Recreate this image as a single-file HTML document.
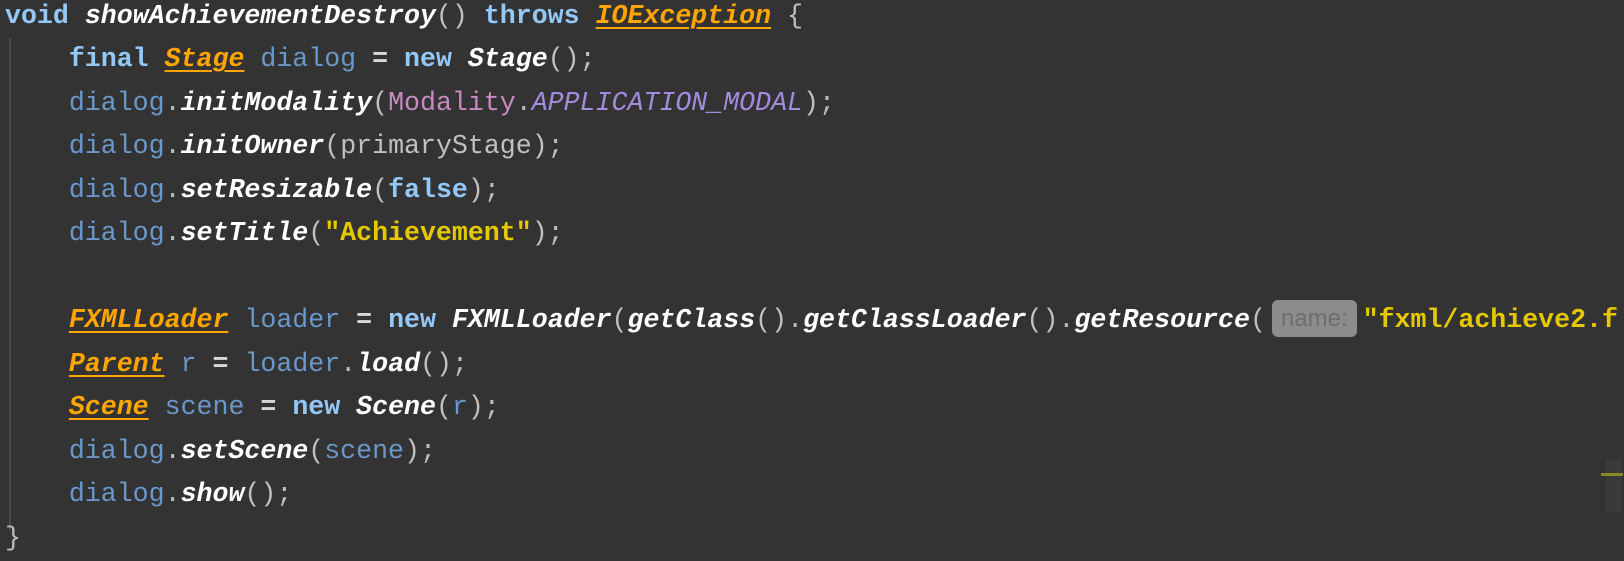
<!DOCTYPE html>
<html><head><meta charset="utf-8"><style>
html,body{margin:0;padding:0;background:#333333;width:1624px;height:542px;overflow:hidden}
.l{position:absolute;left:5px;height:43.5px;line-height:43.5px;font-family:"Liberation Mono","DejaVu Sans Mono",monospace;font-size:26.6px;white-space:pre;color:#bbbbbb}
.k{color:#93c8f7;font-weight:bold}
.m{color:#ffffff;font-style:italic;font-weight:bold}
.c{color:#ffa500;font-style:italic;font-weight:bold;text-decoration:underline;text-underline-offset:4px;text-decoration-thickness:2px}
.v{color:#6b97c9}
.p{color:#c0c0c0}
.s{color:#e6c800;font-weight:bold}
.mo{color:#c98ac2}
.cn{color:#a38cdd;font-style:italic}
.o{color:#d8d8d8;font-weight:bold}
.pl{color:#c0c0c0}
.hint{display:inline-block;background:#8c8c8c;color:#6e6e6e;border-radius:6px;font-family:"Liberation Sans",sans-serif;font-size:24px;line-height:37px;height:37px;padding:0 9px;vertical-align:middle;margin:0 6px 0 6px;position:relative;top:-1px}
</style></head><body>
<div style="position:absolute;left:9px;top:38px;width:2px;height:492px;background:#4b4b4b"></div>
<div style="position:absolute;left:1606px;top:460px;width:16px;height:52px;background:#3a3a3a"></div>
<div style="position:absolute;left:1601px;top:473px;width:22px;height:3px;background:#8a8a20"></div>
<div class="l" style="top:-5px"><span class="k">void</span> <span class="m">showAchievementDestroy</span><span class="p">()</span> <span class="k">throws</span> <span class="c">IOException</span> <span class="pl">{</span></div>
<div class="l" style="top:38px">    <span class="k">final</span> <span class="c">Stage</span> <span class="v">dialog</span> <span class="o">=</span> <span class="k">new</span> <span class="m">Stage</span><span class="p">()</span><span class="pl">;</span></div>
<div class="l" style="top:82px">    <span class="v">dialog</span>.<span class="m">initModality</span><span class="p">(</span><span class="mo">Modality</span>.<span class="cn">APPLICATION_MODAL</span><span class="p">)</span>;</div>
<div class="l" style="top:125px">    <span class="v">dialog</span>.<span class="m">initOwner</span><span class="p">(</span><span class="pl">primaryStage</span><span class="p">)</span>;</div>
<div class="l" style="top:169px">    <span class="v">dialog</span>.<span class="m">setResizable</span><span class="p">(</span><span class="k">false</span><span class="p">)</span>;</div>
<div class="l" style="top:212px">    <span class="v">dialog</span>.<span class="m">setTitle</span><span class="p">(</span><span class="s">"Achievement"</span><span class="p">)</span>;</div>
<div class="l" style="top:299px">    <span class="c">FXMLLoader</span> <span class="v">loader</span> <span class="o">=</span> <span class="k">new</span> <span class="m">FXMLLoader</span><span class="p">(</span><span class="m">getClass</span><span class="p">()</span>.<span class="m">getClassLoader</span><span class="p">()</span>.<span class="m">getResource</span><span class="p">(</span><span class="hint">name:</span><span class="s">"fxml/achieve2.f</span></div>
<div class="l" style="top:343px">    <span class="c">Parent</span> <span class="v">r</span> <span class="o">=</span> <span class="v">loader</span>.<span class="m">load</span><span class="p">()</span>;</div>
<div class="l" style="top:386px">    <span class="c">Scene</span> <span class="v">scene</span> <span class="o">=</span> <span class="k">new</span> <span class="m">Scene</span><span class="p">(</span><span class="v">r</span><span class="p">)</span>;</div>
<div class="l" style="top:430px">    <span class="v">dialog</span>.<span class="m">setScene</span><span class="p">(</span><span class="v">scene</span><span class="p">)</span>;</div>
<div class="l" style="top:473px">    <span class="v">dialog</span>.<span class="m">show</span><span class="p">()</span>;</div>
<div class="l" style="top:517px">}</div>
</body></html>
